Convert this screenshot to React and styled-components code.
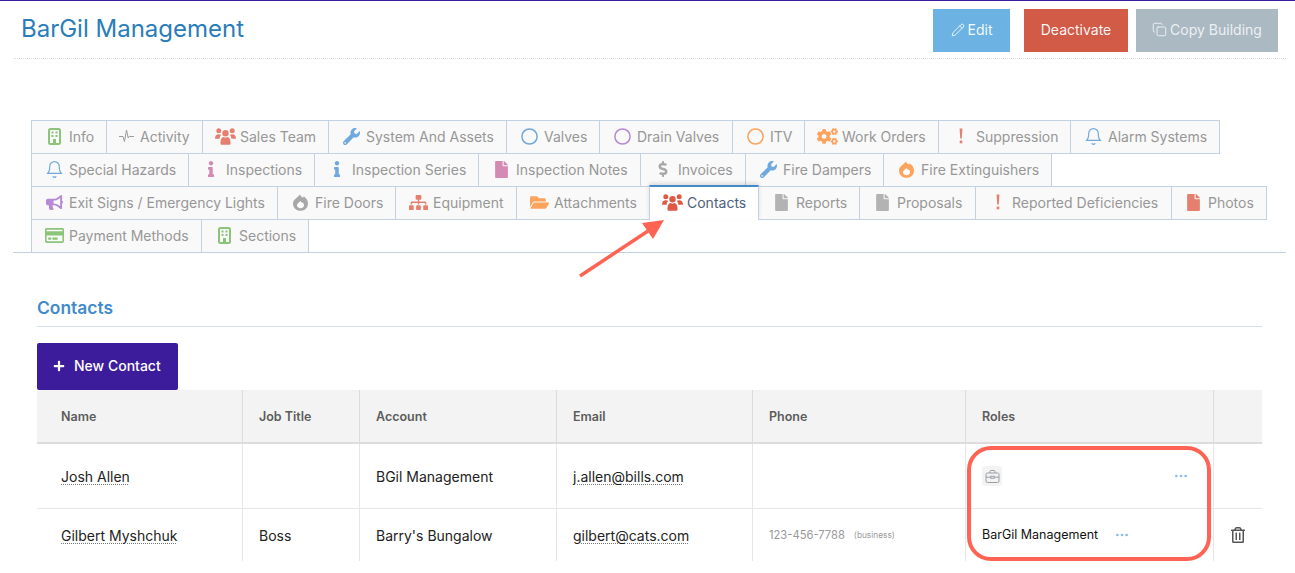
import React from "react";
import styled, { createGlobalStyle } from "styled-components";
import { FaWrench, FaInfo, FaFile, FaDollarSign, FaCogs, FaBullhorn, FaSitemap, FaFolderOpen, FaRegCreditCard, FaPlus, FaRegTrashAlt } from "react-icons/fa";
import { LuPencil, LuCopy, LuEllipsis, LuBell } from "react-icons/lu";

const Global = createGlobalStyle`
  html, body { margin: 0; padding: 0; background: #fff; }
  body { font-family: Inter, "Liberation Sans", sans-serif; }
`;

const Page = styled.div`
  position: relative;
  width: 1295px;
  height: 573px;
  overflow: hidden;
  border-top: 1px solid #3d1c9c;
  box-sizing: border-box;
`;
const Header = styled.header`
  margin: 0 9px 0 13px;
  height: 58px;
  box-sizing: border-box;
  border-bottom: 1px dotted #d8d8d8;
  display: flex;
  align-items: flex-start;
  padding: 8px 8px 0 8px;
`;
const Title = styled.h1`
  margin: 4px auto 0 0;
  font-size: 24px;
  line-height: 32px;
  font-weight: 400;
  color: #2a7db8;
`;
const Btn = styled.button`
  height: 43px;
  width: ${p => p.$w}px;
  margin-left: ${p => p.$ml}px;
  border: 0;
  background: ${p => p.$bg};
  color: ${p => p.$dim ? "rgba(255,255,255,.8)" : "rgba(255,255,255,.94)"};
  font: 400 14px Inter, sans-serif;
  display: flex;
  align-items: center;
  justify-content: center;
  gap: 3px;
  padding: 0 0 2px;
`;
const Tabs = styled.nav`
  margin: 61px 9px 0 13px;
  padding-left: 18px;
  border-bottom: 1px solid #c3d2e3;
  height: 132px;
`;
const Row = styled.div`
  display: flex;
  height: 33px;
`;
const Tab = styled.div`
  box-sizing: border-box;
  width: ${p => p.$w}px;
  height: ${p => p.$active ? 35 : 34}px;
  margin-top: ${p => p.$active ? -1 : 0}px;
  margin-right: -1px;
  position: relative;
  z-index: ${p => p.$active ? 2 : 1};
  background: ${p => p.$active ? "#fff" : "#f9f9f9"};
  border: 1px solid #c3d2e3;
  border-top: ${p => p.$active ? "2px solid #428bca" : "1px solid #c3d2e3"};
  border-bottom: ${p => p.$active ? "0" : "1px solid #c3d2e3"};
  box-shadow: ${p => p.$active ? "0 -2px 4px rgba(0,0,0,.12)" : "none"};
  display: flex;
  align-items: center;
  padding: 0 0 2px ${p => p.$pl}px;
  font-size: 14px;
  color: ${p => p.$active ? "#4f6079" : "#979797"};
  white-space: nowrap;
`;
const TabIcon = styled.span`
  display: inline-flex;
  justify-content: center;
  align-items: center;
  width: ${p => p.$w}px;
  margin-right: ${p => p.$gap}px;
  color: ${p => p.$c};
  font-size: ${p => p.$s}px;
  svg { flex-shrink: 0; }
`;
const Content = styled.section`
  padding: 0 33px 0 37px;
`;
const SectionTitle = styled.h2`
  margin: 45px 0 0;
  height: 28px;
  font-size: 17.4px;
  line-height: 20px;
  font-weight: 600;
  color: #428bca;
  border-bottom: 1px solid #d3e2ee;
`;
const NewBtn = styled.button`
  margin-top: 16px;
  width: 141px;
  height: 47px;
  display: flex;
  align-items: center;
  gap: 9px;
  padding: 0 0 2px 16px;
  border: 0;
  border-radius: 2px;
  background: #3d1c9c;
  color: #fff;
  font: 500 14px Inter, sans-serif;
`;
const Table = styled.div`
  display: grid;
  grid-template-columns: 206px 117px 197px 196px 213px 248px 48px;
`;
const Head = styled.div`
  height: 54px;
  box-sizing: border-box;
  background: #f3f3f3;
  border-bottom: 2px solid #dcdcdc;
  border-right: ${p => p.$last ? 0 : "1px solid #dcdcdc"};
  padding-left: ${p => p.$pl || 16}px;
  display: flex;
  align-items: center;
  font-size: 12.5px;
  font-weight: 600;
  color: #5c5c5c;
`;
const Cell = styled.div`
  height: ${p => p.$h}px;
  box-sizing: border-box;
  border-bottom: ${p => p.$noLine ? 0 : "1px solid #e6e6e6"};
  border-right: ${p => p.$last ? 0 : "1px solid #e6e6e6"};
  padding-left: ${p => p.$pl || 16}px;
  display: flex;
  align-items: center;
  font-size: 14px;
  color: #222;
`;
const Linked = styled.span`
  text-decoration: underline dotted #777 1px;
  text-underline-offset: 2px;
  color: #222;
`;
const PhoneText = styled.span`
  font-size: 11.2px;
  color: #999;
`;
const Small = styled.span`
  font-size: 8.3px;
  color: #999;
  margin-left: 9px;
`;
const RoleIcon = styled.span`
  width: 20px;
  height: 20px;
  border-radius: 4px;
  background: #f3f3f3;
  color: #9a9ea3;
  display: inline-flex;
  align-items: center;
  justify-content: center;
`;
const Dots = styled.span`
  display: inline-flex;
  color: #8db8ec;
  margin-left: ${p => p.$ml}px;
`;
const RoleName = styled.span`
  font-size: 12.5px;
  color: #111;
  margin-top: -2px;
`;
const Trash = styled.span`
  display: inline-flex;
  color: #555;
`;
const Highlight = styled.div`
  position: absolute;
  left: 967px;
  top: 445px;
  width: 244px;
  height: 115px;
  box-sizing: border-box;
  border: 4px solid #ff6353;
  border-radius: 24px;
  pointer-events: none;
`;
const Arrow = styled.svg`
  position: absolute;
  left: 570px;
  top: 212px;
  z-index: 5;
`;

const green = "#8cc47a", red = "#e58070", blue = "#6fa9de", orange = "#fda35d", purple = "#b78ad8", pink = "#d38ab5", grey = "#b3b3b3";

const FireBadge = ({ c }) => (
  <svg width="15" height="17" viewBox="0 0 15 17">
    <path fill={c} d="M7 .4c.6 2 2 2.400 3 3.400.4-.5.600-1 .7-1.600C13 3.800 15 6.400 15 9.400 15 13.600 11.700 16.800 7.500 16.800S0 13.600 0 9.400C0 5.500 3.800 4 7 .4z" />
    <path fill="#fff" d="M7.600 7c.4 1.200 1.200 1.400 1.700 2 .2-.2.400-.5.400-.8C10.600 9.100 11 10.300 11 11.300 11 13 9.500 14.200 7.500 14.200S4 13 4 11.300C4 9.400 6.300 8.700 7.600 7z" />
  </svg>
);
const Ring = ({ c }) => (
  <svg width="17" height="17" viewBox="0 0 17 17">
    <circle cx="8.500" cy="8.500" r="7.600" fill="none" stroke={c} strokeWidth="1.500" />
  </svg>
);
const Building = ({ c }) => (
  <svg width="13" height="17" viewBox="0 0 13 17">
    <rect x="1" y="1" width="11" height="15" rx="1.500" fill="none" stroke={c} strokeWidth="2" />
    <g fill={c}>
      <rect x="3.500" y="3.500" width="2" height="2" />
      <rect x="7.500" y="3.500" width="2" height="2" />
      <rect x="3.500" y="7" width="2" height="2" />
      <rect x="7.500" y="7" width="2" height="2" />
      <rect x="5" y="11" width="3" height="5" />
    </g>
  </svg>
);
const Pulse = ({ c }) => (
  <svg width="15" height="14" viewBox="0 0 15 14">
    <path d="M0 7.500h4l1.500 5 2-11.500 1.700 8 1-1.500H15" fill="none" stroke={c} strokeWidth="1" />
  </svg>
);
const Bang = ({ c }) => (
  <svg width="6" height="16" viewBox="0 0 6 16">
    <path fill={c} d="M1.600 0.500h2.800L3.800 10.500H2.200z" />
    <rect x="1.700" y="12.500" width="2.600" height="2.800" fill={c} />
  </svg>
);
const People = ({ c }) => (
  <svg width="21" height="17" viewBox="0 0 21 17" fill={c}>
    <circle cx="3.800" cy="2.800" r="2.500" />
    <circle cx="17.200" cy="2.800" r="2.500" />
    <circle cx="10.500" cy="5.200" r="3.200" />
    <path d="M0 10.500C0 7.800 1.500 6.300 3.800 6.300c1 0 1.800.3 2.400.8C5.200 8.100 4.700 9.300 4.600 10.800H1c-.6 0-1-.1-1-.3z" />
    <path d="M21 10.500C21 7.800 19.500 6.300 17.200 6.300c-1 0-1.800.3-2.400.8 1 1 1.500 2.200 1.600 3.700H20c.6 0 1-.1 1-.3z" />
    <path d="M5.500 14c0-3 1.800-4.900 3.300-4.900.6.500 1.100.7 1.700.7s1.100-.2 1.700-.7c1.500 0 3.300 1.900 3.300 4.900v1.500c0 .8-.6 1.300-1.300 1.300H6.800c-.7 0-1.300-.5-1.300-1.300z" />
  </svg>
);
const Briefcase = () => (
  <svg width="15" height="15" viewBox="0 0 15 15" fill="none" stroke="currentColor" strokeWidth="1">
    <rect x="1" y="4" width="13" height="9.500" rx="1.500" />
    <path d="M5 4V2.500c0-.6.400-1 1-1h3c.6 0 1 .4 1 1V4M1 8.200h4.800M9.200 8.200H14" />
    <rect x="5.800" y="7.300" width="3.400" height="2" />
  </svg>
);

const rows = [
  [
    { t: "Info", w: 76, pl: 16, i: <Building c={green} />, c: green, s: 17, iw: 13, g: 8 },
    { t: "Activity", w: 97, pl: 12, i: <Pulse c="#9a9a9a" />, c: "#9a9a9a", s: 16, iw: 15, g: 6 },
    { t: "Sales Team", w: 127, pl: 12, i: <People c={red} />, c: red, s: 22, iw: 21, g: 4 },
    { t: "System And Assets", w: 179, pl: 14, i: <FaWrench />, c: blue, s: 17, iw: 17, g: 6 },
    { t: "Valves", w: 94, pl: 14, i: <Ring c={blue} />, c: blue, s: 17, iw: 17, g: 6 },
    { t: "Drain Valves", w: 134, pl: 14, i: <Ring c={purple} />, c: purple, s: 17, iw: 17, g: 6 },
    { t: "ITV", w: 73, pl: 14, i: <Ring c={orange} />, c: orange, s: 17, iw: 17, g: 6 },
    { t: "Work Orders", w: 135, pl: 12, i: <FaCogs />, c: orange, s: 21, iw: 21, g: 4 },
    { t: "Suppression", w: 133, pl: 18, i: <Bang c={red} />, c: red, s: 15, iw: 8, g: 11 },
    { t: "Alarm Systems", w: 150, pl: 15, i: <LuBell strokeWidth={1.5} />, c: blue, s: 19, iw: 15, g: 7 },
  ],
  [
    { t: "Special Hazards", w: 158, pl: 15, i: <LuBell strokeWidth={1.5} />, c: blue, s: 19, iw: 15, g: 7 },
    { t: "Inspections", w: 127, pl: 17, i: <FaInfo />, c: pink, s: 16, iw: 10, g: 10 },
    { t: "Inspection Series", w: 165, pl: 17, i: <FaInfo />, c: blue, s: 16, iw: 10, g: 10 },
    { t: "Inspection Notes", w: 163, pl: 16, i: <FaFile />, c: pink, s: 17, iw: 13, g: 8 },
    { t: "Invoices", w: 106, pl: 16, i: <FaDollarSign />, c: "#a8a8a8", s: 16, iw: 11, g: 10 },
    { t: "Fire Dampers", w: 139, pl: 14, i: <FaWrench />, c: blue, s: 17, iw: 17, g: 6 },
    { t: "Fire Extinguishers", w: 169, pl: 14, i: <FireBadge c={orange} />, c: orange, s: 16, iw: 16, g: 7 },
  ],
  [
    { t: "Exit Signs / Emergency Lights", w: 247, pl: 14, i: <FaBullhorn />, c: purple, s: 17, iw: 17, g: 6 },
    { t: "Fire Doors", w: 119, pl: 15, i: <FireBadge c="#a8a8a8" />, c: grey, s: 16, iw: 15, g: 7 },
    { t: "Equipment", w: 122, pl: 13, i: <FaSitemap />, c: red, s: 19, iw: 19, g: 5 },
    { t: "Attachments", w: 134, pl: 12, i: <FaFolderOpen />, c: orange, s: 19, iw: 20, g: 5 },
    { t: "Contacts", w: 110, pl: 12, i: <People c="#df5a45" />, c: "#df5a45", s: 22, iw: 21, g: 4, active: true },
    { t: "Reports", w: 102, pl: 16, i: <FaFile />, c: grey, s: 17, iw: 13, g: 8 },
    { t: "Proposals", w: 117, pl: 16, i: <FaFile />, c: grey, s: 17, iw: 13, g: 8 },
    { t: "Reported Deficiencies", w: 197, pl: 18, i: <Bang c={red} />, c: red, s: 15, iw: 8, g: 10 },
    { t: "Photos", w: 96, pl: 15, i: <FaFile />, c: red, s: 17, iw: 13, g: 8 },
  ],
  [
    { t: "Payment Methods", w: 171, pl: 13, i: <FaRegCreditCard />, c: green, s: 19, iw: 19, g: 5 },
    { t: "Sections", w: 108, pl: 16, i: <Building c={green} />, c: green, s: 17, iw: 13, g: 8 },
  ],
];

const heads = ["Name", "Job Title", "Account", "Email", "Phone", "Roles", ""];

export default function App() {
  return (
    <Page>
      <Global />
      <Header>
        <Title>BarGil Management</Title>
        <Btn $w={77} $bg="#6cb2e2"><LuPencil size={14} strokeWidth={1.5} /> Edit</Btn>
        <Btn $w={104} $ml={14} $bg="#d15b47">Deactivate</Btn>
        <Btn $w={142} $ml={8} $bg="#abb9c3" $dim><LuCopy size={15} strokeWidth={1.5} /> Copy Building</Btn>
      </Header>
      <Tabs>
        {rows.map((r, i) => (
          <Row key={i}>
            {r.map(tab => (
              <Tab key={tab.t} $w={tab.w} $pl={tab.pl} $active={tab.active}>
                <TabIcon $w={tab.iw} $gap={tab.g} $c={tab.c} $s={tab.s}>{tab.i}</TabIcon>
                {tab.t}
              </Tab>
            ))}
          </Row>
        ))}
      </Tabs>
      <Content>
        <SectionTitle>Contacts</SectionTitle>
        <NewBtn><FaPlus size={12} /> New Contact</NewBtn>
        <Table>
          {heads.map((h, i) => <Head key={i} $last={i === 6} $pl={i === 0 ? 24 : 16}>{h}</Head>)}
          <Cell $h={65} $pl={24}><Linked>Josh Allen</Linked></Cell>
          <Cell $h={65} />
          <Cell $h={65}>BGil Management</Cell>
          <Cell $h={65}><Linked>j.allen@bills.com</Linked></Cell>
          <Cell $h={65} />
          <Cell $h={65}>
            <RoleIcon><Briefcase /></RoleIcon>
            <Dots $ml={171}><LuEllipsis size={16} /></Dots>
          </Cell>
          <Cell $h={65} $last />
          <Cell $h={52} $pl={24} $noLine><Linked>Gilbert Myshchuk</Linked></Cell>
          <Cell $h={52} $noLine>Boss</Cell>
          <Cell $h={52} $noLine>Barry's Bungalow</Cell>
          <Cell $h={52} $noLine><Linked>gilbert@cats.com</Linked></Cell>
          <Cell $h={52} $noLine><PhoneText>123-456-7788</PhoneText><Small>(business)</Small></Cell>
          <Cell $h={52} $noLine><RoleName>BarGil Management</RoleName><Dots $ml={16}><LuEllipsis size={16} /></Dots></Cell>
          <Cell $h={52} $noLine $last><Trash><FaRegTrashAlt size={16} /></Trash></Cell>
        </Table>
      </Content>
      <Arrow width="110" height="75" viewBox="0 0 110 75">
        <line x1="10" y1="63" x2="78" y2="18" stroke="#ff6353" strokeWidth="3.500" />
        <polygon points="94,7 72,10 83,26" fill="#ff6353" />
      </Arrow>
      <Highlight />
    </Page>
  );
}
